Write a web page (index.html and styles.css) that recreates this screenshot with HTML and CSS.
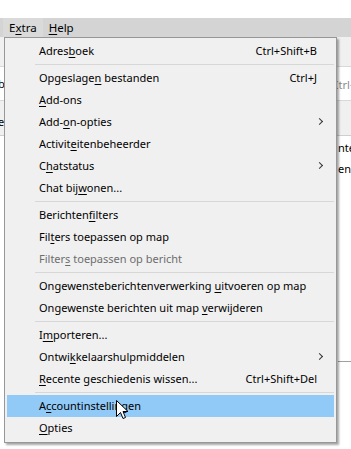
FILE: index.html
```html
<!DOCTYPE html>
<html lang="nl">

<head>
    <meta charset="UTF-8">
    <meta name="viewport" content="width=device-width, initial-scale=1.0">
    <title>Extra menu</title>
    <link rel="stylesheet" href="styles.css">
</head>

<body>
    <div class="app">
        <div class="topgap"></div>
        <nav class="menubar">
            <a class="open" href="#">E<u>x</u>tra</a>
            <a href="#"><u>H</u>elp</a>
        </nav>

        <!-- window content behind the menu -->
        <div class="content">
            <div class="toolbar"></div>
            <div class="searchrow">
                <span class="left-text">b</span>
                <span class="search">Ctrl+K</span>
            </div>
            <div class="tabs">
                <span class="left-text">e</span>
            </div>
            <div class="list">
                <div class="list-left">
                    <span>,</span>
                </div>
                <div class="list-right">
                    <span>nte</span>
                    <span>en</span>
                </div>
            </div>
            <div class="pane-line"></div>
        </div>

        <ul class="dropdown">
            <li><span>Adres<u>b</u>oek</span><span class="key">Ctrl+Shift+B</span></li>
            <li class="sep"></li>
            <li><span>Opgeslage<u>n</u> bestanden</span><span class="key">Ctrl+J</span></li>
            <li><span><u>A</u>dd-ons</span></li>
            <li class="sub"><span>Add-<u>o</u>n-opties</span></li>
            <li><span>Activit<u>e</u>itenbeheerder</span></li>
            <li class="sub"><span>C<u>h</u>atstatus</span></li>
            <li><span>Chat bij<u>w</u>onen...</span></li>
            <li class="sep"></li>
            <li><span>Berichten<u>f</u>ilters</span></li>
            <li><span>Fil<u>t</u>ers toepassen op map</span></li>
            <li class="disabled"><span>Filter<u>s</u> toepassen op bericht</span></li>
            <li class="sep"></li>
            <li><span>Ongewensteberichtenverwerking <u>u</u>itvoeren op map</span></li>
            <li><span>Ongewenste berichten uit map <u>v</u>erwijderen</span></li>
            <li class="sep"></li>
            <li><span>I<u>m</u>porteren...</span></li>
            <li class="sub"><span>Ontwi<u>k</u>kelaarshulpmiddelen</span></li>
            <li><span><u>R</u>ecente geschiedenis wissen...</span><span class="key">Ctrl+Shift+Del</span></li>
            <li class="sep"></li>
            <li class="hover"><span>A<u>c</u>countinstellingen</span></li>
            <li><span><u>O</u>pties</span></li>
        </ul>

        <svg class="cursor" width="13" height="20" viewBox="0 0 13 20">
            <path d="M0.5 0.5 L0.5 16.5 L4.5 12.5 L7 18.5 L9.5 17.5 L7 11.5 L12 11.5 Z" fill="#fff" stroke="#000" stroke-width="1" stroke-linejoin="round"/>
        </svg>
    </div>
</body>

</html>
```

FILE: styles.css
```css
body {
    margin: 0;
    padding: 0;
    background-color: #fff;
    font-family: "Noto Sans", "Open Sans", sans-serif;
    font-size: 11px;
    color: #000;
}

u {
    text-decoration: underline;
    text-underline-offset: 2px;
}

.app {
    position: relative;
    width: 351px;
    height: 449px;
    overflow: hidden;
}

.topgap {
    height: 18px;
}

.menubar {
    display: flex;
    height: 19px;
    background-color: #d4d4d4;
    padding-left: 3px;
    font-size: 11.5px;
}

.menubar a {
    display: flex;
    align-items: center;
    padding: 0 6px;
    color: #000;
    text-decoration: none;
}

.menubar a.open {
    background-color: #dadada;
}

/* content behind the dropdown */
.content {
    display: flex;
    flex-direction: column;
}

.toolbar {
    height: 29px;
    background-color: #f0f0f0;
    border-bottom: 1px solid #d9d9d9;
}

.searchrow {
    display: flex;
    justify-content: space-between;
    align-items: center;
    height: 33px;
    border-bottom: 1px solid #d9d9d9;
    white-space: nowrap;
}

.left-text {
    margin-left: -2px;
}

.search {
    color: #8a8a8a;
    margin-right: -12px;
    padding-top: 2px;
}

.tabs {
    display: flex;
    align-items: center;
    height: 35px;
    padding-top: 6px;
    box-sizing: border-box;
    background-color: #f0f0f0;
    border-bottom: 1px solid #cfcfcf;
}

.list {
    display: flex;
    justify-content: space-between;
    height: 225px;
}

.list-left,
.list-right {
    display: flex;
    flex-direction: column;
    gap: 6px;
    padding-top: 4px;
}

.list-left {
    margin-left: -3px;
    padding-top: 28px;
}

.list-right {
    margin-right: -4px;
}

.pane-line {
    height: 1px;
    background-color: #a0a0a0;
    margin-left: 338px;
}

/* dropdown */
.dropdown {
    position: absolute;
    left: 4px;
    top: 37px;
    width: 331px;
    margin: 0;
    padding: 2px 0 3px;
    list-style: none;
    background-color: #f0f0f0;
    border: 1px solid #979797;
    box-shadow: 2px 2px 2px rgba(0, 0, 0, 0.35);
    white-space: nowrap;
}

.dropdown li {
    display: flex;
    justify-content: space-between;
    align-items: center;
    height: 22px;
    box-sizing: border-box;
    margin: 0 2px;
    padding: 0 17px 2px 32px;
    position: relative;
}

.dropdown li.sep {
    height: 5px;
    padding: 0;
    margin: 0 2px 0 30px;
}

.dropdown li.sep::after {
    content: "";
    position: absolute;
    left: 0;
    right: 0;
    top: 2px;
    height: 1px;
    background-color: #d7d7d7;
}

.dropdown li.disabled {
    color: #6d6d6d;
}

.dropdown li.hover {
    background-color: #91c9f7;
}

.dropdown li.sub::after {
    content: "";
    position: absolute;
    right: 12px;
    top: 8px;
    width: 4px;
    height: 4px;
    border-top: 1px solid #333;
    border-right: 1px solid #333;
    transform: rotate(45deg);
}

.cursor {
    position: absolute;
    left: 116px;
    top: 400px;
}
```
